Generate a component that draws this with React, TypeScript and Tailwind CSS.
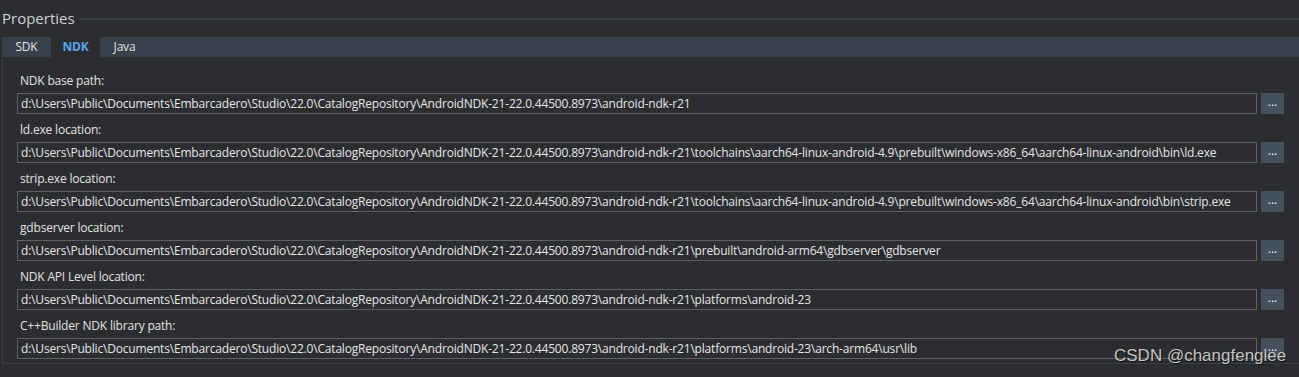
import React from 'react';

const BASE = 'd:\\Users\\Public\\Documents\\Embarcadero\\Studio\\22.0\\CatalogRepository\\AndroidNDK-21-22.0.44500.8973\\android-ndk-r21';

const rows = [
  { label: 'NDK base path:', value: BASE },
  { label: 'ld.exe location:', value: BASE + '\\toolchains\\aarch64-linux-android-4.9\\prebuilt\\windows-x86_64\\aarch64-linux-android\\bin\\ld.exe' },
  { label: 'strip.exe location:', value: BASE + '\\toolchains\\aarch64-linux-android-4.9\\prebuilt\\windows-x86_64\\aarch64-linux-android\\bin\\strip.exe' },
  { label: 'gdbserver location:', value: BASE + '\\prebuilt\\android-arm64\\gdbserver\\gdbserver' },
  { label: 'NDK API Level location:', value: BASE + '\\platforms\\android-23' },
  { label: 'C++Builder NDK library path:', value: BASE + '\\platforms\\android-23\\arch-arm64\\usr\\lib' },
];

const tabs = ['SDK', 'NDK', 'Java'];

export default function App() {
  return (
    <div className="relative w-[1299px] h-[377px] overflow-hidden bg-[#2b2d31] font-['Open_Sans',sans-serif] text-[12px] tracking-[-0.19px] text-[#e2e2e2]">
      {/* header */}
      <div className="flex h-[37px] items-center pl-[2px]">
        <span className="text-[15px] tracking-normal text-[#cfd0d2] leading-[20px] -mt-[1px]">Properties</span>
        <div className="ml-[5px] h-[2px] flex-1 bg-[#37414b]" />
      </div>

      {/* tabs */}
      <div className="ml-[2px] flex h-[20px] bg-[#37414b]">
        {tabs.map((t) => (
          <div
            key={t}
            className={
              t === 'NDK'
                ? 'flex w-[49px] items-center justify-center bg-[#2b2d31] font-bold text-[#5aa6ee]'
                : 'flex w-[49px] items-center justify-center text-[#e2e2e2]'
            }
          >
            {t}
          </div>
        ))}
      </div>

      {/* panel */}
      <div className="ml-[2px] h-[307px] border-b border-l border-[#3a3f45] pl-[14px] pr-[15px] pt-[16px]">
        <div className="flex flex-col gap-[8px]">
          {rows.map((r) => (
            <div key={r.label} className="flex flex-col">
              <div className="h-[16px] pl-[3px] leading-[16px]">{r.label}</div>
              <div className="mt-[4px] flex h-[21px] gap-[4px]">
                <div className="flex flex-1 items-center border border-[#5e6063] pl-[3px] text-[#e6e6e6] whitespace-nowrap overflow-hidden">
                  {r.value}
                </div>
                <div className="flex w-[23px] items-center justify-center bg-[#44505b] pb-[3px] text-white tracking-normal">
                  ...
                </div>
              </div>
            </div>
          ))}
        </div>
      </div>

      {/* watermark */}
      <div className="absolute left-[1114px] top-[345px] font-['Liberation_Sans',sans-serif] text-[17px] tracking-normal leading-[22px] text-[#c4c4c4] [text-shadow:1px_1px_1px_#111]">
        CSDN @changfenglee
      </div>
    </div>
  );
}
